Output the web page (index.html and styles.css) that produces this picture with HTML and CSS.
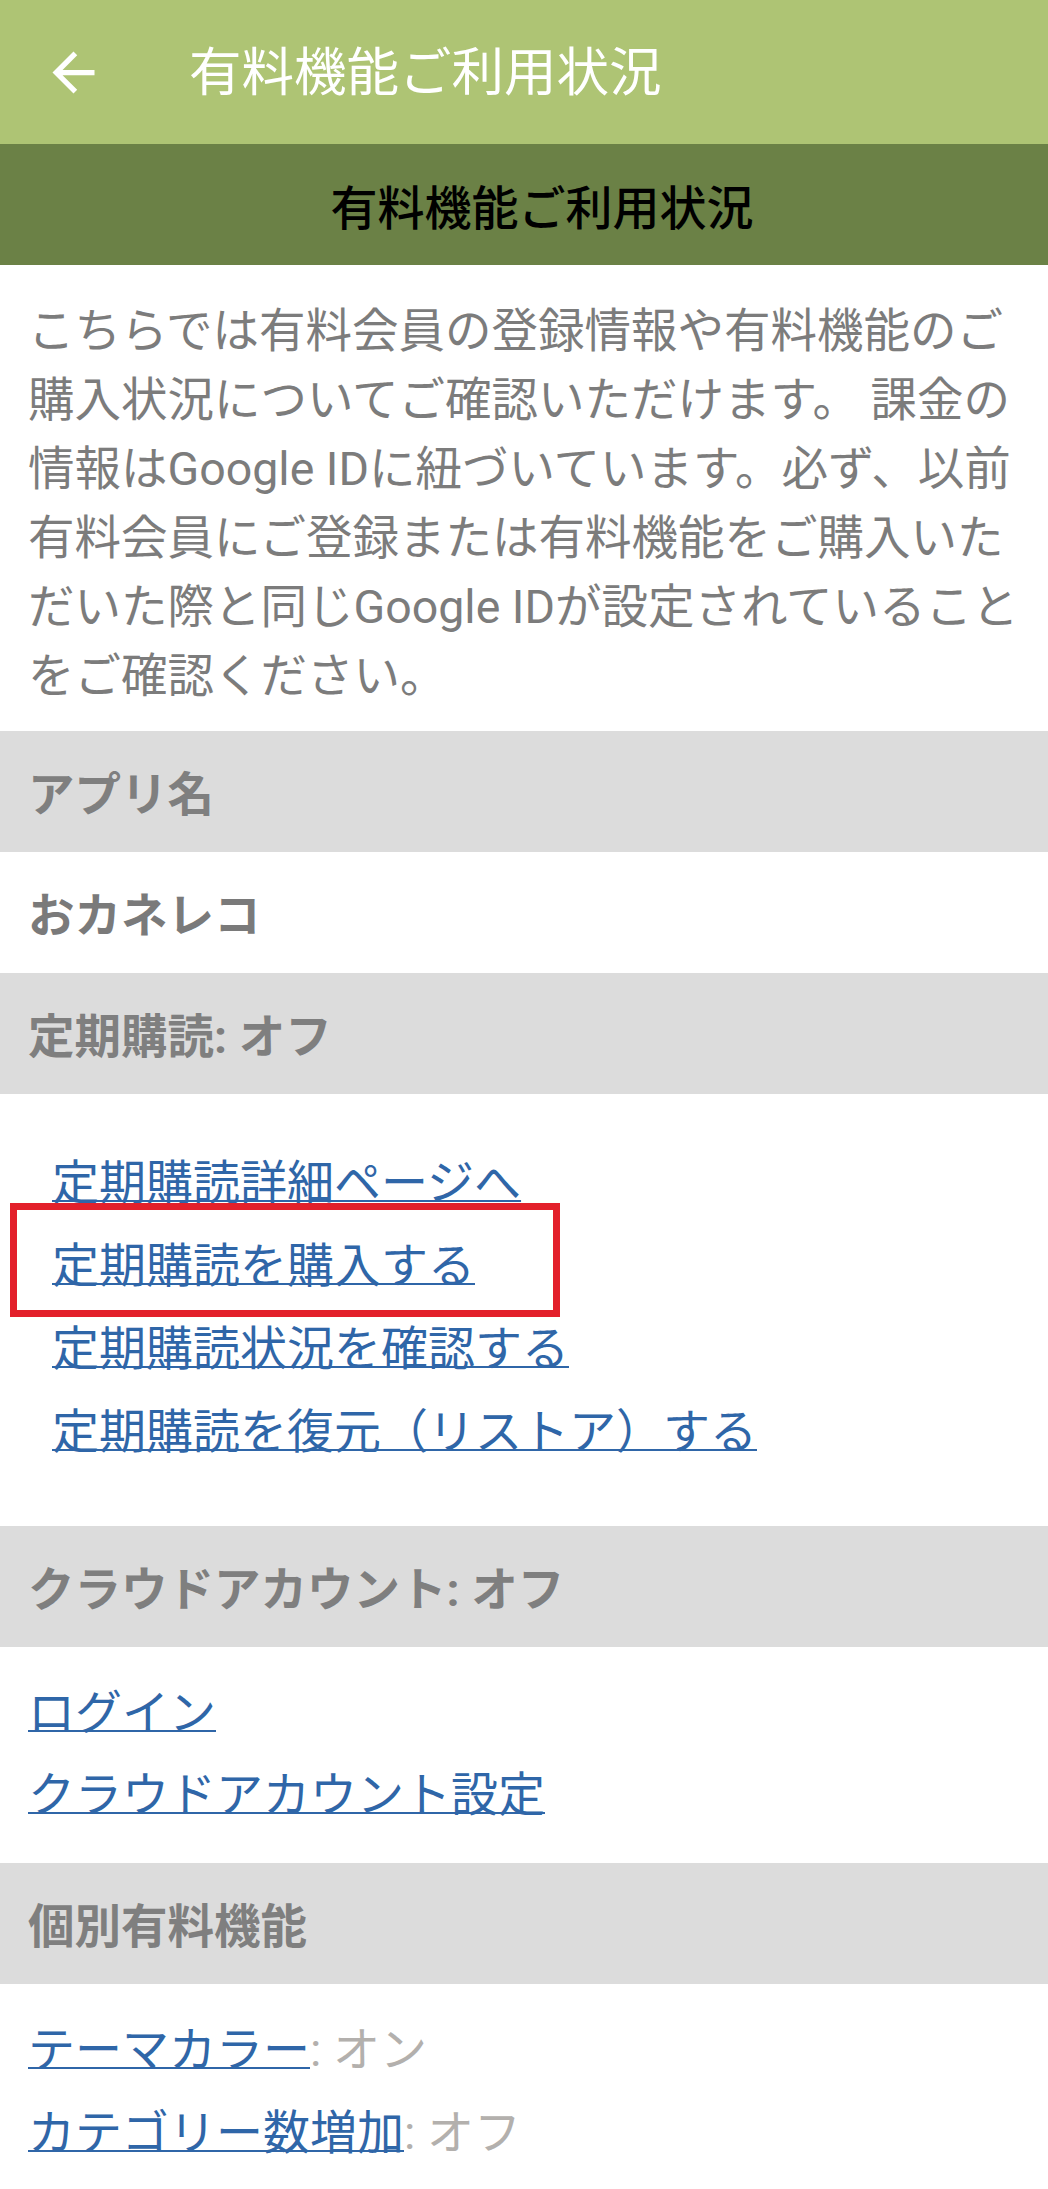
FILE: index.html
```html
<!DOCTYPE html>
<html lang="ja">
<head>
    <meta charset="UTF-8">
    <meta name="viewport" content="width=device-width, initial-scale=1.0">
    <title>有料機能ご利用状況</title>
    <link rel="stylesheet" href="styles.css">
</head>
<body>
    <header class="appbar">
        <button class="back-btn" aria-label="戻る">
            <svg viewBox="0 0 24 24" width="63" height="63">
                <path fill="#fff" d="M20 11H7.83l5.59-5.59L12 4l-8 8 8 8 1.41-1.41L7.83 13H20v-2z"/>
            </svg>
        </button>
        <h1 class="appbar-title">有料機能ご利用状況</h1>
    </header>

    <div class="page-title">有料機能ご利用状況</div>

    <p class="intro">こちらでは有料会員の登録情報や有料機能のご購入状況についてご確認いただけます。 課金の情報はGoogle IDに紐づいています。必ず、以前有料会員にご登録または有料機能をご購入いただいた際と同じGoogle IDが設定されていることをご確認ください。</p>

    <div class="sec-head">アプリ名</div>
    <div class="sec-value">おカネレコ</div>

    <div class="sec-head">定期購読: オフ</div>
    <div class="sec-body sub-links">
        <a href="#">定期購読詳細ページへ</a>
        <a href="#">定期購読を購入する</a>
        <a href="#">定期購読状況を確認する</a>
        <a href="#">定期購読を復元（リストア）する</a>
        <span class="highlight"></span>
    </div>

    <div class="sec-head">クラウドアカウント: オフ</div>
    <div class="sec-body cloud-links">
        <a href="#">ログイン</a>
        <a href="#">クラウドアカウント設定</a>
    </div>

    <div class="sec-head">個別有料機能</div>
    <div class="sec-body features">
        <div class="feature"><a href="#">テーマカラー</a><span class="state">: オン</span></div>
        <div class="feature"><a href="#">カテゴリー数増加</a><span class="state">: オフ</span></div>
    </div>
</body>
</html>
```

FILE: styles.css
```css
* {
    margin: 0;
    padding: 0;
    box-sizing: border-box;
}

body {
    font-family: Roboto, "Noto Sans CJK JP", sans-serif;
    font-size: 46.5px;
    background-color: #fff;
    color: #7c7c7c;
}

.appbar {
    height: 144px;
    background-color: #aec474;
    display: flex;
    align-items: center;
}

.back-btn {
    width: 63px;
    height: 63px;
    margin-left: 42px;
    background: none;
    border: none;
    display: flex;
}

.appbar-title {
    margin-left: 84px;
    font-size: 52.5px;
    font-weight: normal;
    color: #fff;
    line-height: 1;
    padding-top: 2px;
}

.page-title {
    background-color: #6b8146;
    color: #000;
    font-size: 47px;
    font-weight: 500;
    text-align: center;
    line-height: 69px;
    padding: 30px 0 22px 36px;
}

.intro {
    line-height: 69px;
    padding: 32px 24px 20px 28px;
}

.sec-head {
    background-color: #dcdcdc;
    color: #7f7f7f;
    font-weight: bold;
    line-height: 69px;
    padding: 30px 28px 22px;
}

.sec-value {
    color: #7a7a7a;
    font-weight: bold;
    line-height: 69px;
    padding: 30px 28px 22px;
}

.sec-body {
    font-size: 47px;
}

.sec-body a {
    display: block;
}

a {
    color: #2f66a8;
    text-decoration-thickness: 2px;
}

.sub-links {
    position: relative;
    padding: 47px 28px 53px 52px;
    line-height: 83px;
}

.cloud-links {
    padding: 25px 28px 27px;
    line-height: 82px;
}

.features {
    padding: 24px 28px 40px;
    line-height: 83px;
}

.feature a {
    display: inline;
}

.state {
    color: #b3b0ad;
}

.highlight {
    position: absolute;
    left: 10px;
    top: 109px;
    width: 550px;
    height: 114px;
    border: 7px solid #e3202b;
}
```
